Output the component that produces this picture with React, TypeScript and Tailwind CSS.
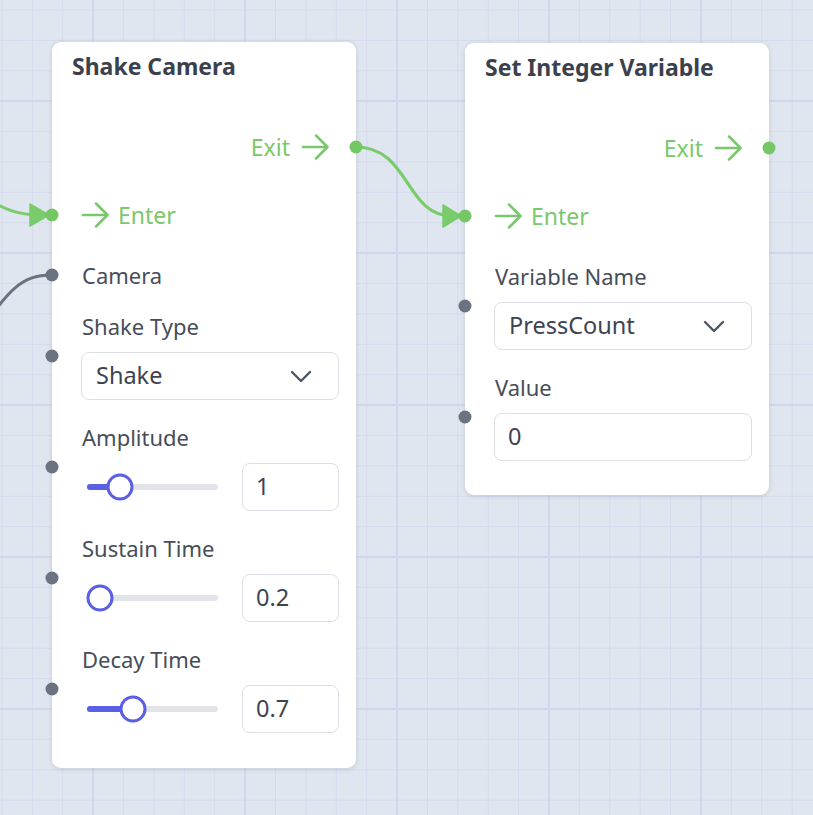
import React from "react";

const GREEN = "#79c86b";

const Arrow = () => (
  <svg width="28" height="28" viewBox="0 0 28 28" fill="none" stroke={GREEN} strokeWidth="2.5" strokeLinecap="round" strokeLinejoin="round">
    <path d="M2 14H26M15 2.5L26.5 14L15 25.5" />
  </svg>
);

const Chevron = () => (
  <svg width="22" height="13" viewBox="0 0 22 13" fill="none" stroke="#4b5563" strokeWidth="2.4" strokeLinecap="round" strokeLinejoin="round">
    <path d="M2 2L11 11L20 2" />
  </svg>
);

const Handle = ({ side, color }: { side: "left" | "right"; color: "green" | "gray" }) => (
  <span
    className={
      "absolute top-1/2 -translate-y-1/2 w-[13px] h-[13px] rounded-full " +
      (side === "left" ? "left-0 -translate-x-1/2 " : "right-0 translate-x-1/2 ") +
      (color === "green" ? "bg-[#74c764]" : "bg-[#6b7280]")
    }
  />
);

const Field = ({ label, first, children }: { label: string; first?: boolean; children?: React.ReactNode }) => (
  <div className={"relative pl-[29px] pr-[17px] " + (first ? "mt-[32px]" : "mt-[23px]")}>
    <Handle side="left" color="gray" />
    <div className="pl-[1px] text-[22px] leading-[28px] text-[#474d59]">{label}</div>
    {children && <div className="mt-[12px]">{children}</div>}
  </div>
);

const Select = ({ value }: { value: string }) => (
  <div className="h-[48px] rounded-[8px] border border-[#dcdfe5] bg-white flex items-center justify-between pl-[14px] pr-[26px]">
    <span className="text-[23.5px] text-[#3d4451]">{value}</span>
    <Chevron />
  </div>
);

const TextBox = ({ value, className }: { value: string; className?: string }) => (
  <div className={"h-[48px] rounded-[8px] border border-[#dcdfe5] bg-white flex items-center pl-[13px] " + (className ?? "")}>
    <span className="text-[23.5px] text-[#3d4451]">{value}</span>
  </div>
);

const Slider = ({ pos, value }: { pos: number; value: string }) => (
  <div className="flex items-center h-[48px]">
    <div className="relative ml-[6px] w-[131px] h-[6px] rounded-full bg-[#e2e4e9]">
      <div className="absolute left-0 top-0 h-full rounded-l-full bg-[#5b5fe3]" style={{ width: pos }} />
      <div
        className="absolute top-1/2 w-[27px] h-[27px] -translate-x-1/2 -translate-y-1/2 rounded-full border-[3px] border-[#5b5fe3] bg-white"
        style={{ left: pos }}
      />
    </div>
    <TextBox value={value} className="ml-auto w-[97px]" />
  </div>
);

const FlowRows = () => (
  <>
    <div className="relative mt-[53px] h-[28px] flex items-center justify-end gap-[11px] pr-[27px]">
      <span className="text-[23px] text-[#79c86b]">Exit</span>
      <Arrow />
      <Handle side="right" color="green" />
    </div>
    <div className="relative mt-[40px] h-[28px] flex items-center gap-[9px] pl-[29px]">
      <Arrow />
      <span className="text-[23px] text-[#79c86b]">Enter</span>
      <Handle side="left" color="green" />
    </div>
  </>
);

const NodeCard = ({ className, title, children }: { className: string; title: string; children: React.ReactNode }) => (
  <div className={"absolute w-[304px] rounded-[9px] bg-white shadow-[0_1px_5px_rgba(30,41,59,0.14)] " + className}>
    <h3 className="pt-[10px] px-[20px] text-[23px] leading-[28px] font-bold text-[#3b414c]">{title}</h3>
    <FlowRows />
    {children}
  </div>
);

export default function App() {
  return (
    <div className="relative w-[813px] h-[815px] overflow-hidden font-['Noto_Sans',sans-serif] bg-[#e0e6ef] bg-[linear-gradient(to_right,#d2d6ee_2px,transparent_2px),linear-gradient(to_bottom,#d2d6ee_2px,transparent_2px),linear-gradient(to_right,#d5daee_1px,transparent_1px),linear-gradient(to_bottom,#d5daee_1px,transparent_1px)] bg-[size:152px_152px,152px_152px,30.4px_30.4px,30.4px_30.4px] bg-[position:92px_100px,92px_100px,1.5px_9.5px,1.5px_9.5px]">
      <svg className="absolute inset-0" width="813" height="815" viewBox="0 0 813 815" fill="none">
        <path d="M-60 188C-8 188 -8 215 40 215" stroke="#7acb6b" strokeWidth="3" />
        <polygon points="30,204 49,215 30,226" fill="#7acb6b" stroke="#7acb6b" strokeWidth="1.5" strokeLinejoin="round" />
        <path d="M356 147C410 147 405 216 452 216" stroke="#7acb6b" strokeWidth="3.2" />
        <polygon points="443,205 461,216 443,227" fill="#7acb6b" stroke="#7acb6b" strokeWidth="1.5" strokeLinejoin="round" />
        <path d="M-30 345C8 292 18 275 52 275" stroke="#6b7280" strokeWidth="3" />
      </svg>

      <NodeCard className="left-[52px] top-[42px] pb-[35px]" title="Shake Camera">
        <Field label="Camera" first />
        <Field label="Shake Type">
          <Select value="Shake" />
        </Field>
        <Field label="Amplitude">
          <Slider pos={33} value="1" />
        </Field>
        <Field label="Sustain Time">
          <Slider pos={13} value="0.2" />
        </Field>
        <Field label="Decay Time">
          <Slider pos={46} value="0.7" />
        </Field>
      </NodeCard>

      <NodeCard className="left-[465px] top-[43px] pb-[34px]" title="Set Integer Variable">
        <Field label="Variable Name" first>
          <Select value="PressCount" />
        </Field>
        <Field label="Value">
          <TextBox value="0" />
        </Field>
      </NodeCard>
    </div>
  );
}
